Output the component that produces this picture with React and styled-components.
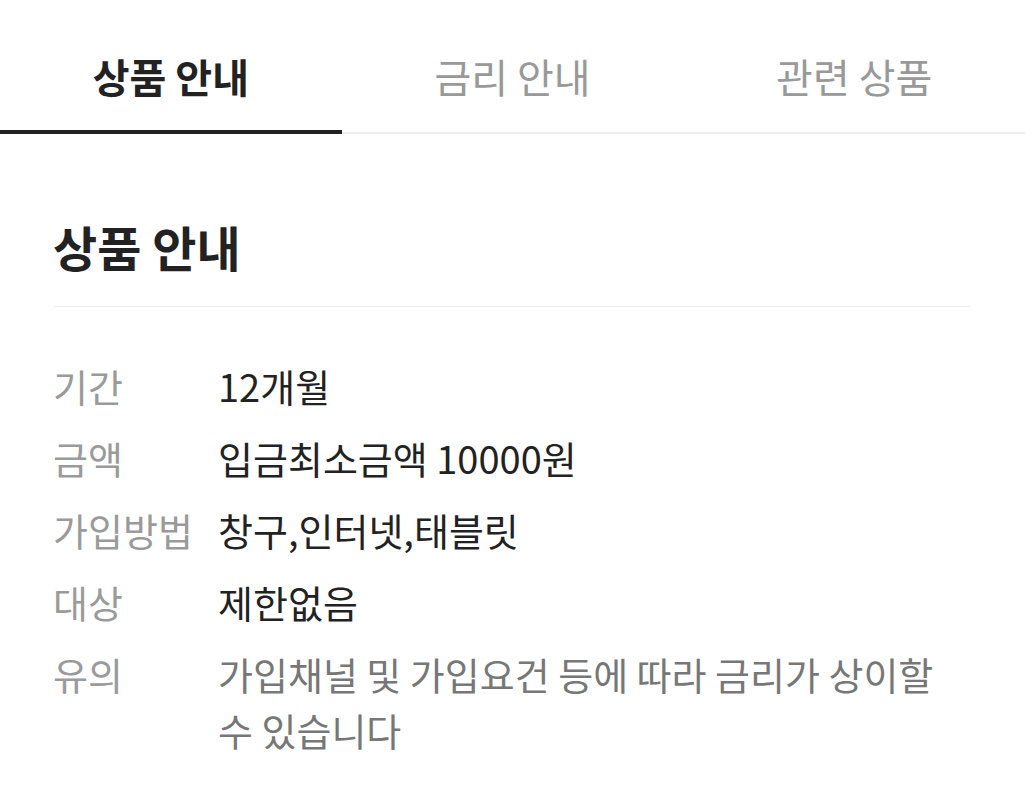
import React from "react";
import styled, { createGlobalStyle } from "styled-components";

const Global = createGlobalStyle`
  html, body { margin: 0; padding: 0; background: #fff; }
  body { font-family: "Noto Sans CJK KR", "Noto Sans", sans-serif; }
`;

const TabBar = styled.div`
  display: flex;
  border-bottom: 2px solid #eeeeee;
`;

const Tab = styled.div`
  flex: 1;
  display: flex;
  justify-content: center;
  align-items: center;
  height: 132px;
  padding-top: 19px;
  box-sizing: border-box;
  font-size: 40px;
  font-weight: ${(p) => (p.$active ? 700 : 400)};
  color: ${(p) => (p.$active ? "#222222" : "#999999")};
  position: relative;
  &::after {
    content: "";
    position: absolute;
    left: 0;
    right: 0;
    bottom: -2px;
    height: 4px;
    background: ${(p) => (p.$active ? "#222222" : "transparent")};
  }
`;

const Section = styled.section`
  padding: 0 55px 0 53px;
`;

const Title = styled.h2`
  margin: 0;
  padding: 86px 0 34px;
  font-size: 48px;
  font-weight: 700;
  line-height: 52px;
  color: #222222;
  border-bottom: 1px solid #eeeeee;
`;

const List = styled.dl`
  margin: 0;
  padding-top: 51px;
  display: grid;
  grid-template-columns: 165px 1fr;
  row-gap: 16px;
  font-size: 38px;
  line-height: 56px;
  word-break: keep-all;
`;

const Label = styled.dt`
  color: #9a9a9a;
  white-space: nowrap;
`;

const Value = styled.dd`
  margin: 0;
  color: ${(p) => (p.$muted ? "#777777" : "#222222")};
`;

const rows = [
  ["기간", "12개월"],
  ["금액", "입금최소금액 10000원"],
  ["가입방법", "창구,인터넷,태블릿"],
  ["대상", "제한없음"],
  ["유의", "가입채널 및 가입요건 등에 따라 금리가 상이할 수 있습니다", true],
];

export default function App() {
  return (
    <>
      <Global />
      <TabBar>
        <Tab $active>상품 안내</Tab>
        <Tab>금리 안내</Tab>
        <Tab>관련 상품</Tab>
      </TabBar>
      <Section>
        <Title>상품 안내</Title>
        <List>
          {rows.map(([k, v, muted]) => (
            <React.Fragment key={k}>
              <Label>{k}</Label>
              <Value $muted={muted}>{v}</Value>
            </React.Fragment>
          ))}
        </List>
      </Section>
    </>
  );
}
